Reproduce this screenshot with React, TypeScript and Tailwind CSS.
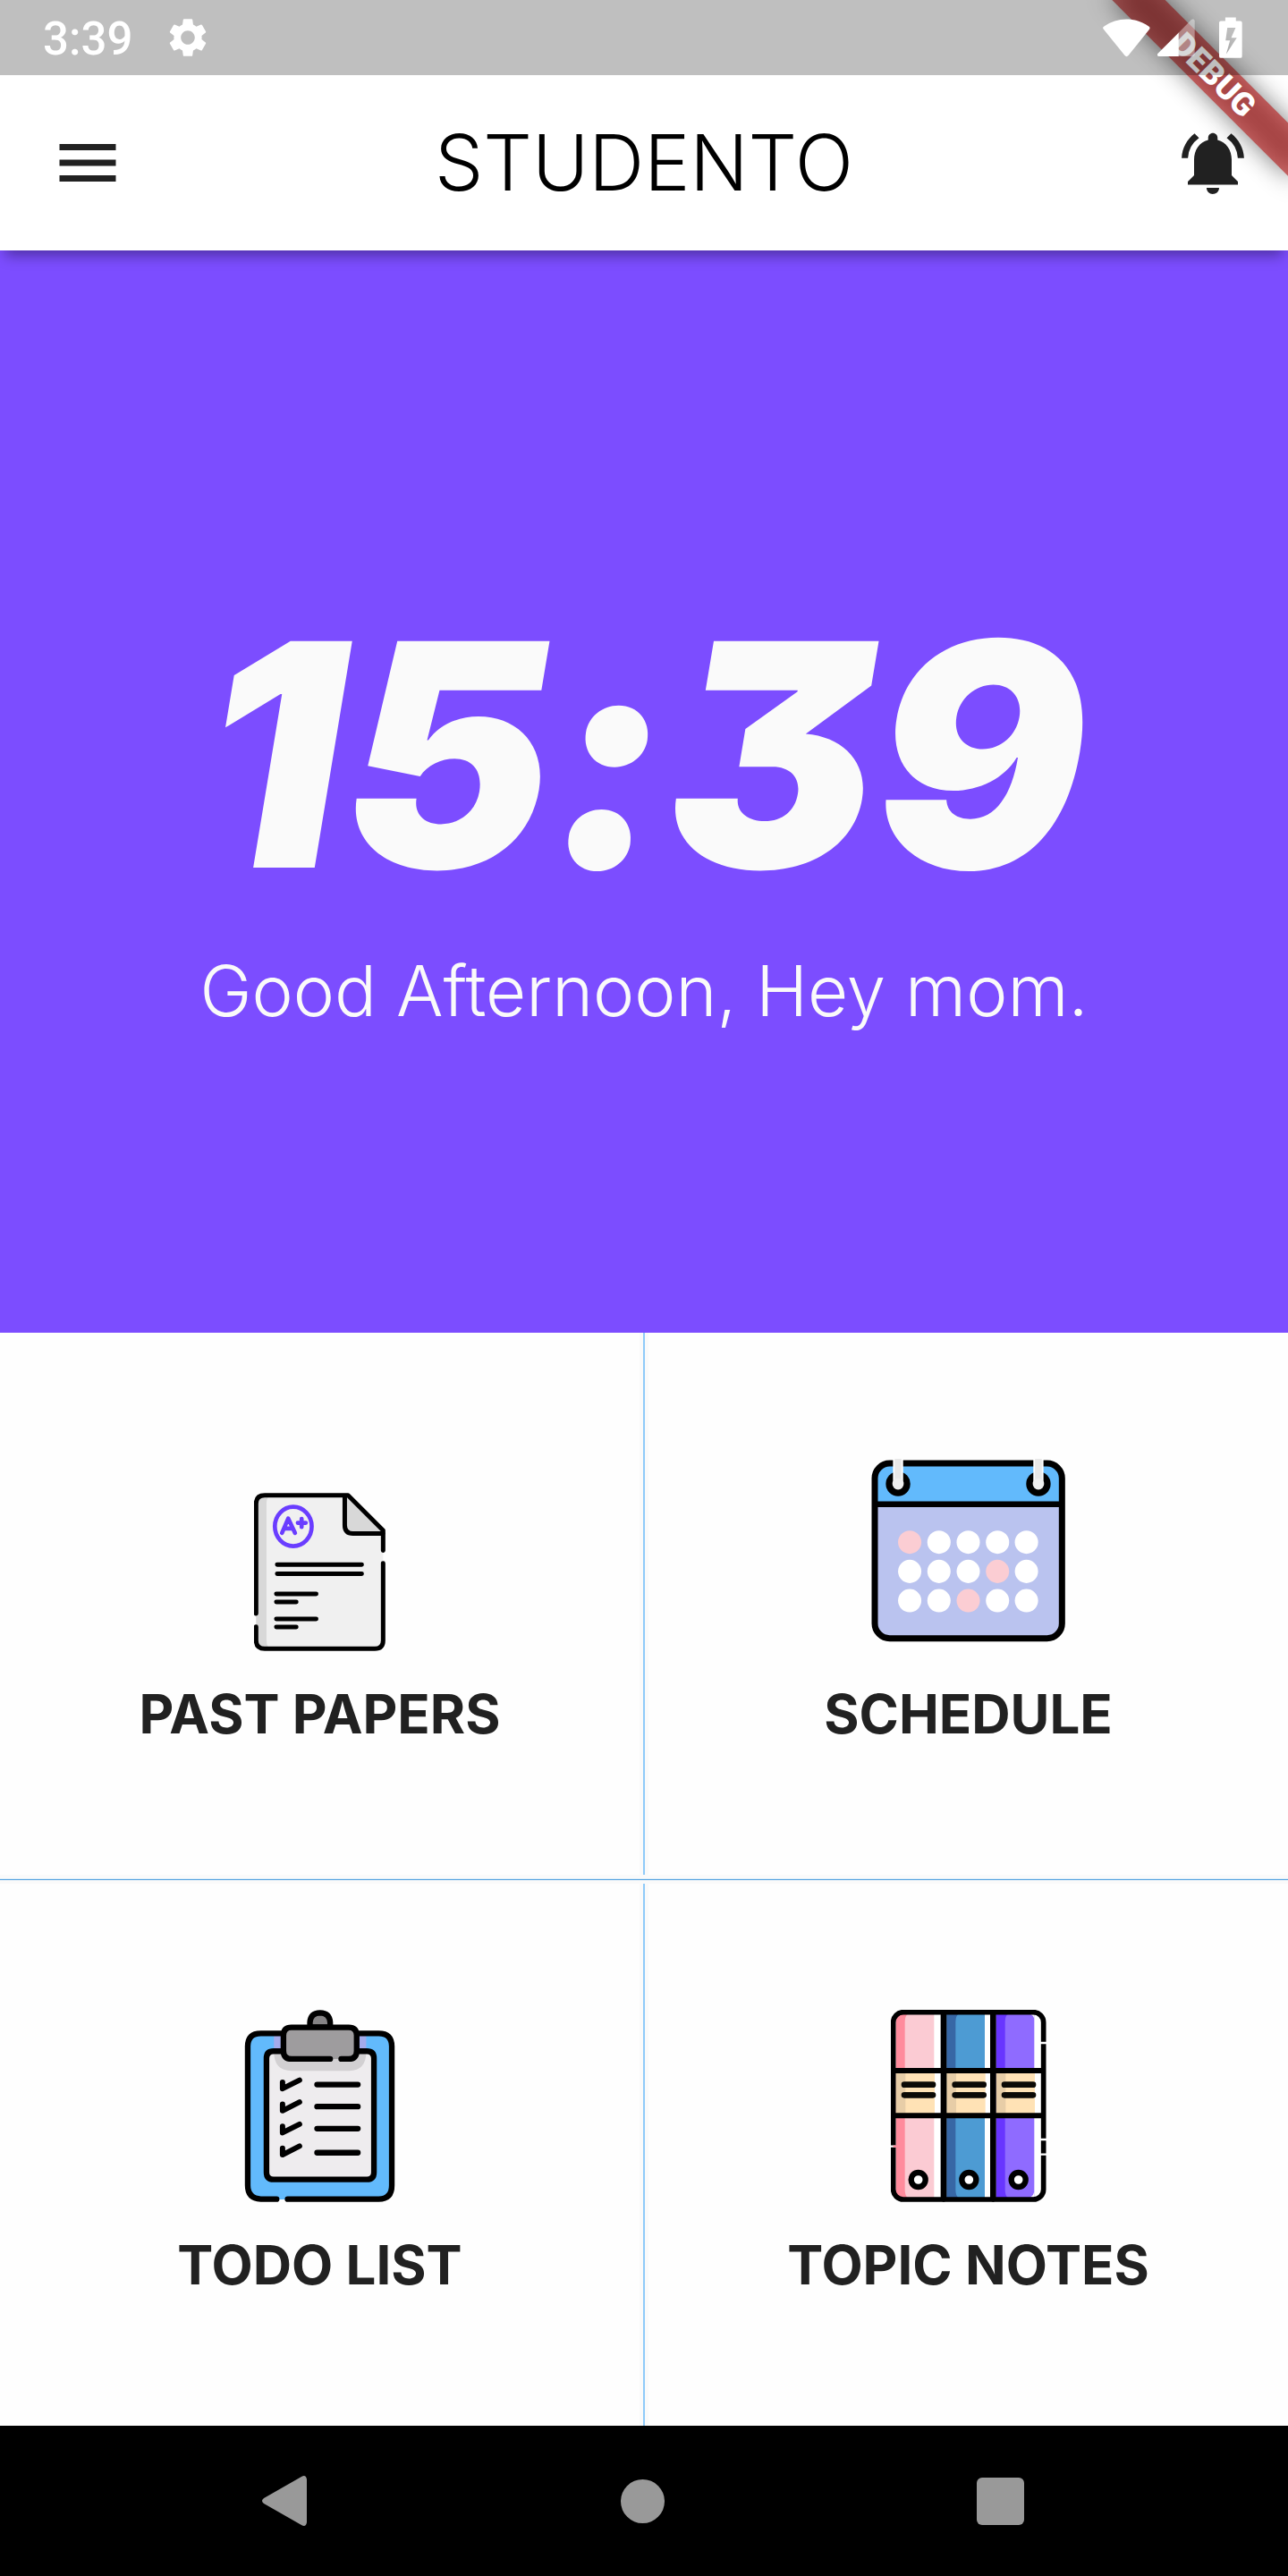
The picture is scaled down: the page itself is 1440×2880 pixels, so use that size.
import type { ReactNode } from "react";
import { MdMenu, MdNotificationsActive, MdSettings } from "react-icons/md";

function StatusBar() {
  return (
    <div className="relative z-20 flex h-[84px] items-center justify-between bg-black/25 pl-12 pr-[51px] text-white">
      <div className="flex items-center gap-9">
        <span className="pt-0.5 font-[Roboto,sans-serif] text-[51px] leading-none font-medium">3:39</span>
        <MdSettings className="size-[52px]" aria-hidden="true" />
      </div>
      <div className="flex items-center gap-2">
        <svg viewBox="156 58 160 130" className="h-[43px] w-[53px]" fill="currentColor" aria-hidden="true">
          <path d="M159 94Q153 88 160 84C205 51 266 51 311 84Q318 88 312 95L242 182Q236 189 230 182Z" />
        </svg>
        <svg viewBox="342 65 127 127" className="h-[42px] w-[42px]" fill="currentColor" aria-hidden="true">
          <path d="M414 112V192H347Q339 190 343 183Z" />
          <path d="M414 112L456 69Q466 62 468 72V186Q468 192 462 192H414Z" opacity=".4" />
        </svg>
        <svg viewBox="549 56 79 139" className="ml-[19px] h-[46px] w-[26px]" fill="currentColor" aria-hidden="true">
          <path
            fillRule="evenodd"
            d="M570 57H606V69H621Q627 69 627 75V189Q627 195 621 195H555Q549 195 549 189V75Q549 69 555 69H570ZM577 92L571 135H586L573 182L609 126H590L605 92Z"
          />
        </svg>
      </div>
    </div>
  );
}

function DebugBanner() {
  return (
    <div className="pointer-events-none absolute top-0 right-0 z-10 size-[300px] overflow-hidden">
      <div className="absolute top-[63px] left-[77px] h-[42px] w-[280px] rotate-45">
        <div className="absolute inset-0 bg-black/50 blur-[14px]" />
        <div className="absolute inset-0 flex items-center justify-center bg-[#b71c1c]/63 font-[Roboto,sans-serif] text-[36px] leading-none font-black text-white">
          DEBUG
        </div>
      </div>
    </div>
  );
}

function PaperIcon() {
  return (
    <svg viewBox="72 86 442 532" className="h-[177px] w-[147px]" fill="none" strokeLinecap="round" strokeLinejoin="round" aria-hidden="true">
      <path d="M79 120Q79 94 106 94H388L506 212V582Q506 610 478 610H106Q79 610 79 582Z" fill="#f0f0f0" />
      <path d="M79 120Q79 94 106 94H130Q114 98 114 120V582Q114 606 130 610H106Q79 610 79 582Z" fill="#d8d8d8" />
      <path d="M377 96V195Q377 223 405 223H505V212L388 94Z" fill="#d8d8d8" />
      <g stroke="#000" strokeWidth="15">
        <path d="M79 492V122Q79 94 108 94H388L506 212V280" />
        <path d="M377 98V195Q377 223 405 223H505" />
        <path d="M79 536V582Q79 610 108 610H478Q506 610 506 582V323" />
        <path d="M150 327H434M150 358H434M147 426H281M147 453H214M147 510H281M147 537H214" />
      </g>
      <g stroke="#6a3dff" strokeWidth="14">
        <ellipse cx="204" cy="199" rx="62" ry="66" />
        <path d="M166 221L187 172L210 221M176 206H202M232 173V201M219 187H246" />
      </g>
    </svg>
  );
}

const dotColumns = [201, 299, 397, 495, 592];
const dotRows = [341, 439, 537];
const markedDots = ["201-341", "495-439", "397-537"];

function CalendarIcon() {
  return (
    <svg viewBox="72 62 650 614" className="mb-[10px] h-[205px] w-[217px]" fill="none" aria-hidden="true">
      <path d="M84 213V130Q84 78 136 78H658Q711 78 711 130V213Z" fill="#62bafc" />
      <path d="M84 213H711V612Q711 664 658 664H136Q84 664 84 612Z" fill="#bac3ef" />
      <rect x="84" y="77" width="627" height="586" rx="50" stroke="#000" strokeWidth="21" />
      <path d="M84 214H711" stroke="#000" strokeWidth="20" />
      {[162, 632].map((x) => (
        <g key={x}>
          <circle cx={x} cy="146" r="41" fill="#000" />
          <path d={`M${x} 62V146`} stroke="#fff" strokeWidth="34" />
          <path d={`M${x} 62V148`} stroke="#e8e8e8" strokeWidth="23" />
          <circle cx={x} cy="146" r="19" fill="#efefef" />
        </g>
      ))}
      {dotRows.map((y) =>
        dotColumns.map((x) => (
          <circle key={`${x}-${y}`} cx={x} cy={y} r="39" fill={markedDots.includes(`${x}-${y}`) ? "#fbcdd3" : "#fff"} />
        )),
      )}
    </svg>
  );
}

function ClipboardIcon() {
  return (
    <svg viewBox="68 50 506 646" className="h-[215px] w-[169px]" fill="none" strokeLinecap="round" strokeLinejoin="round" aria-hidden="true">
      <rect x="79" y="129" width="485" height="558" rx="44" fill="#62bafc" />
      <path d="M167 135H477V190H167Z" fill="#a3abeb" />
      <rect x="142" y="189" width="361" height="431" rx="22" fill="#eeecee" />
      <path d="M167 190H477Q477 255 420 255H226Q167 255 167 190Z" fill="#d2d0d2" />
      <g stroke="#000" strokeWidth="19">
        <path d="M176 686H123Q79 684 79 640V173Q79 129 123 129H196M450 129H519Q563 129 563 173V640Q563 686 519 686H213" />
        <path d="M194 189H166Q142 189 142 213V596Q142 620 166 620H479Q503 620 503 596V213Q503 189 479 189H450" />
        <path d="M288 108V92Q290 61 322 60Q354 61 356 92V108Z" fill="#858385" />
        <path d="M226 109H418Q445 109 445 136V188Q445 215 418 215H226Q199 215 199 188V136Q199 109 226 109Z" fill="#9e9c9e" stroke="none" />
        <path d="M356 215H226Q199 215 199 188V136Q199 109 226 109H418Q445 109 445 136V188Q445 215 418 215H393" />
        <path d="M312 301H449M312 375H449M312 449H449M312 530H449" />
        <path d="M196 293V315L253 286M196 367V389L253 360M196 441V463L253 434M196 515V537L253 508" strokeWidth="18" />
      </g>
    </svg>
  );
}

const binders = [
  { x: 94, spine: "#ff8b9c", body: "#fbcbd3" },
  { x: 264, spine: "#3767a5", body: "#4d9bd3" },
  { x: 430, spine: "#6835ff", body: "#8f6bff" },
];

function BindersIcon() {
  return (
    <svg viewBox="77 50 522 645" className="h-[215px] w-[174px]" fill="none" strokeLinecap="round" aria-hidden="true">
      <rect x="86" y="58" width="504" height="629" rx="32" fill="#fff" />
      {binders.map(({ x, spine, body }) => (
        <g key={x}>
          <path d={`M${x} 64H${x + 128}V680H${x}Z`} fill={body} />
          <path d={`M${x} 64H${x + 40}Q${x + 30} 70 ${x + 30} 90V654Q${x + 30} 674 ${x + 40} 680H${x}Z`} fill={spine} />
          <path d={`M${x} 254H${x + 130}V405H${x}Z`} fill="#ffe2b5" />
          <path d={`M${x} 254H${x + 32}V405H${x}Z`} fill="#e7cda7" />
          <path d={`M${x + 28} 301H${x + 124}M${x + 28} 336H${x + 124}`} stroke="#0c0a06" strokeWidth="20" />
          <circle cx={x + 75} cy="620" r="24" fill="#fff" stroke="#000" strokeWidth="19" />
        </g>
      ))}
      <path d="M558 66V80Q556 70 546 66ZM558 678V660Q556 672 546 678Z" fill="#fff" />
      <rect x="85" y="58" width="504" height="628" rx="34" stroke="#000" strokeWidth="17" />
      <path d="M254 60V684M420 60V684" stroke="#000" strokeWidth="20" />
      <path d="M88 254H586M88 405H586" stroke="#000" strokeWidth="18" />
      <path d="M576 161H599M576 485H599M576 535H599" stroke="#fff" strokeWidth="7" />
      <path d="M77 508H90" stroke="#fff" strokeWidth="7" />
      <path d="M88 508H97" stroke="#ff8b9c" strokeWidth="7" />
    </svg>
  );
}

function Tile({ label, children }: { label: string; children: ReactNode }) {
  return (
    <button type="button" className="flex flex-col items-center gap-[30px] bg-[#fefefe] py-[140px]">
      <span className="flex h-[216px] items-end">{children}</span>
      <span className="text-[60px] leading-[80px] font-bold text-[#212121]">{label}</span>
    </button>
  );
}

function TileRow({ children }: { children: ReactNode }) {
  return (
    <div className="grid grid-cols-[1fr_2px_1fr] gap-x-1">{children}</div>
  );
}

export default function App() {
  return (
    <div className="relative flex min-h-screen flex-col bg-white font-[Inter,sans-serif]">
      <StatusBar />
      <DebugBanner />
      <header className="relative flex h-[196px] items-center justify-between bg-white pr-[42px] pl-[56px] shadow-[0_12px_14px_-6px_rgba(0,0,0,0.35)]">
        <button type="button" aria-label="Open menu" className="text-[#212121]">
          <MdMenu className="size-[84px]" />
        </button>
        <h1 className="absolute inset-x-40 text-center text-[86px] leading-none font-light text-black">STUDENTO</h1>
        <button type="button" aria-label="Notifications" className="text-[#212121]">
          <MdNotificationsActive className="size-[84px]" />
        </button>
      </header>

      <main className="flex flex-1 flex-col">
        <section className="flex flex-1 flex-col items-center justify-center gap-9 bg-[#7c4dff] pt-[50px] text-[#fafafa]">
          <time className="text-[348px] leading-[360px] font-black italic [font-feature-settings:'calt'_0,'cv09'_1]">15:39</time>
          <p className="text-[78px] leading-[96px] font-light">Good Afternoon, Hey mom.</p>
        </section>

        <nav aria-label="Sections" className="flex flex-col gap-1 bg-[#fafafa]">
          <TileRow>
            <Tile label="PAST PAPERS">
              <PaperIcon />
            </Tile>
            <div className="bg-[#90caf9]" />
            <Tile label="SCHEDULE">
              <CalendarIcon />
            </Tile>
          </TileRow>
          <div className="h-0.5 border-t border-[#dcedfa] bg-[#4f9fde]" />
          <TileRow>
            <Tile label="TODO LIST">
              <ClipboardIcon />
            </Tile>
            <div className="bg-[#90caf9]" />
            <Tile label="TOPIC NOTES">
              <BindersIcon />
            </Tile>
          </TileRow>
        </nav>
      </main>

      <footer className="grid h-[168px] grid-cols-3 items-center justify-items-center bg-black pr-[122px] pl-[118px] text-[#999]">
        <button type="button" aria-label="Back">
          <svg viewBox="0 0 50 56" className="h-[56px] w-[50px]" fill="currentColor" aria-hidden="true">
            <path d="M44 1Q49 -2 50 4V52Q49 58 44 55L2 31Q-2 28 2 25Z" />
          </svg>
        </button>
        <button type="button" aria-label="Home" className="size-[49px] rounded-full bg-[#999]" />
        <button type="button" aria-label="Recent apps" className="size-[53px] rounded-md bg-[#999]" />
      </footer>
    </div>
  );
}
